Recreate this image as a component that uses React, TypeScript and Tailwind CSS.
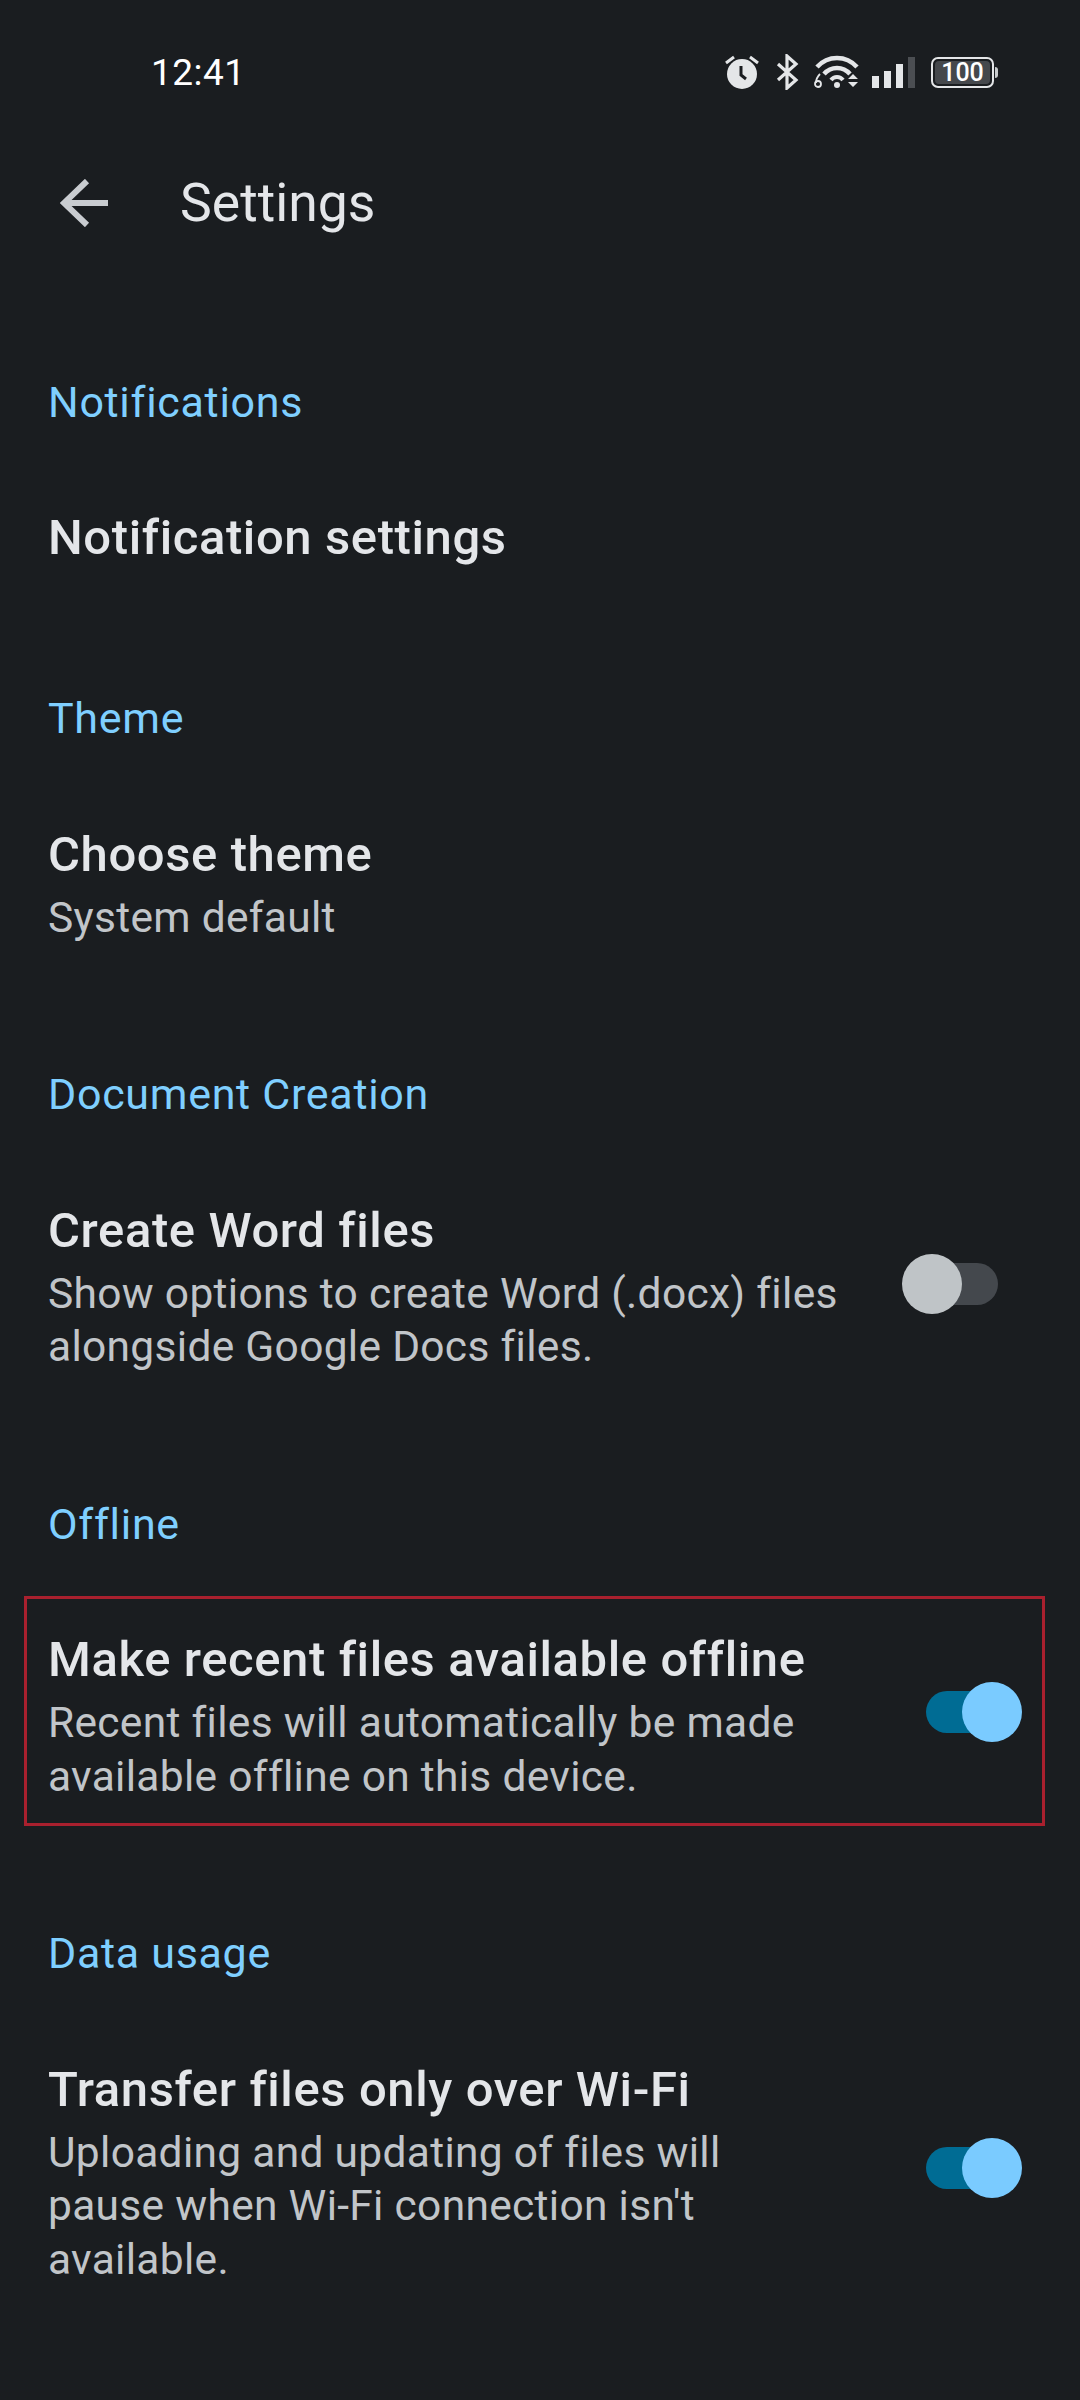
import React from "react";

function Section({ label, children }: { label: string; children: React.ReactNode }) {
  return (
    <section className="pt-[120px] first:pt-[109.5px]">
      <h2 className="h-[60px] pl-[48px] text-[43px] leading-[60px] text-[#7fcfff] font-normal tracking-[0.7px]">{label}</h2>
      <div className="pt-[76.5px]">{children}</div>
    </section>
  );
}

function Item({ title, desc, toggle, boxed }: { title: string; desc?: string[]; toggle?: "on" | "off"; boxed?: boolean }) {
  return (
    <div className="relative flex items-center pl-[48px]">
      <div className="flex-1">
        <div className="h-[60px] text-[49px] leading-[60px] font-medium text-[#e4e6e9] tracking-[0.6px]">{title}</div>
        {desc && (
          <div className="pt-[6px] text-[42.5px] leading-[53.5px] text-[#c1c5c9] tracking-[0.3px]">
            {desc.map((d) => (
              <div key={d}>{d}</div>
            ))}
          </div>
        )}
      </div>
      {toggle === "off" && (
        <div className="relative mb-[6px] mr-[82px] h-[42px] w-[82px] rounded-full bg-[#44484d]">
          <div className="absolute left-[-14px] top-[-9px] h-[60px] w-[60px] rounded-full bg-[#bfc4c7]" />
        </div>
      )}
      {toggle === "on" && (
        <div className="relative mb-[10px] mr-[72px] h-[42px] w-[82px] rounded-full bg-[#006c94]">
          <div className="absolute right-[-14px] top-[-9px] h-[60px] w-[60px] rounded-full bg-[#7acbff]" />
        </div>
      )}
      {boxed && <div className="pointer-events-none absolute left-[24px] right-[35px] top-[-34px] bottom-[-23px] border-[3px] border-[#a9202e]" />}
    </div>
  );
}

function StatusIcons() {
  return (
    <div className="flex items-center">
      <svg width="36" height="36" viewBox="0 0 36 36">
        <circle cx="18" cy="20" r="15" fill="#e4e6e8" />
        <path d="M17 12v9l5 4" stroke="#1a1d20" strokeWidth="3" fill="none" />
        <path d="M2 9l8-6M34 9l-8-6" stroke="#e4e6e8" strokeWidth="3" />
      </svg>
      <svg width="24" height="36" viewBox="0 0 24 36" className="ml-[15px]">
        <path d="M3 10l18 16-9 8V2l9 8L3 26" stroke="#e4e6e8" strokeWidth="3.2" fill="none" />
      </svg>
      <svg width="46" height="36" viewBox="0 0 46 36" className="ml-[15px]">
        <path d="M3 13C14 1 32 1 43 13" stroke="#e4e6e8" strokeWidth="4.5" fill="none" />
        <path d="M10 20C17 12 29 12 36 20" stroke="#e4e6e8" strokeWidth="4.5" fill="none" />
        <path d="M17 26C20 22 26 22 29 26" stroke="#e4e6e8" strokeWidth="4" fill="none" />
        <circle cx="23" cy="31" r="3" fill="#e4e6e8" />
        <path d="M34 25l5-5 5 5zM34 28l5 5 5-5z" fill="#e4e6e8" />
        <circle cx="4" cy="30" r="3" stroke="#e4e6e8" strokeWidth="1.8" fill="none" />
        <path d="M2 29c0-4 2-7 4-9" stroke="#e4e6e8" strokeWidth="1.8" fill="none" />
      </svg>
      <svg width="44" height="32" viewBox="0 0 44 32" className="ml-[11px]">
        <rect x="1" y="20" width="7" height="12" fill="#e4e6e8" />
        <rect x="13" y="15" width="7" height="17" fill="#e4e6e8" />
        <rect x="25" y="8" width="7" height="24" fill="#e4e6e8" />
        <rect x="37" y="1" width="7" height="31" fill="#4b4e52" />
      </svg>
      <div className="relative ml-[16px] flex h-[31px] w-[63px] items-center justify-center rounded-[7px] border-[2px] border-[#e4e6e8]">
        <div className="flex h-[23px] w-[55px] items-center justify-center rounded-[4px] bg-[#45484c] text-[25px] font-medium leading-[23px] text-white">100</div>
      </div>
      <div className="ml-[1px] h-[11px] w-[3px] rounded-r-full bg-[#c9ccce]" />
    </div>
  );
}

export default function App() {
  return (
    <div className="h-[2400px] w-[1080px] overflow-hidden bg-[#1a1d20]" style={{ fontFamily: "Roboto, sans-serif" }}>
      <div className="flex h-[144px] items-center justify-between pl-[151px] pr-[82px]">
        <span className="text-[37px] leading-none text-white tracking-[0.5px]">12:41</span>
        <StatusIcons />
      </div>
      <header className="flex h-[118px] items-center pl-[60px]">
        <svg width="48" height="48" viewBox="0 0 48 48" fill="none">
          <path d="M48 24H4M27 2 4 24l23 22" stroke="#c9ccd0" strokeWidth="6" />
        </svg>
        <h1 className="pl-[72px] text-[53.5px] font-normal leading-none text-[#e4e6e9]">Settings</h1>
      </header>
      <main>
        <Section label="Notifications">
          <Item title="Notification settings" />
        </Section>
        <Section label="Theme">
          <Item title="Choose theme" desc={["System default"]} />
        </Section>
        <Section label="Document Creation">
          <Item title="Create Word files" desc={["Show options to create Word (.docx) files", "alongside Google Docs files."]} toggle="off" />
        </Section>
        <Section label="Offline">
          <Item title="Make recent files available offline" desc={["Recent files will automatically be made", "available offline on this device."]} toggle="on" boxed />
        </Section>
        <Section label="Data usage">
          <Item title="Transfer files only over Wi-Fi" desc={["Uploading and updating of files will", "pause when Wi-Fi connection isn't", "available."]} toggle="on" />
        </Section>
      </main>
    </div>
  );
}
